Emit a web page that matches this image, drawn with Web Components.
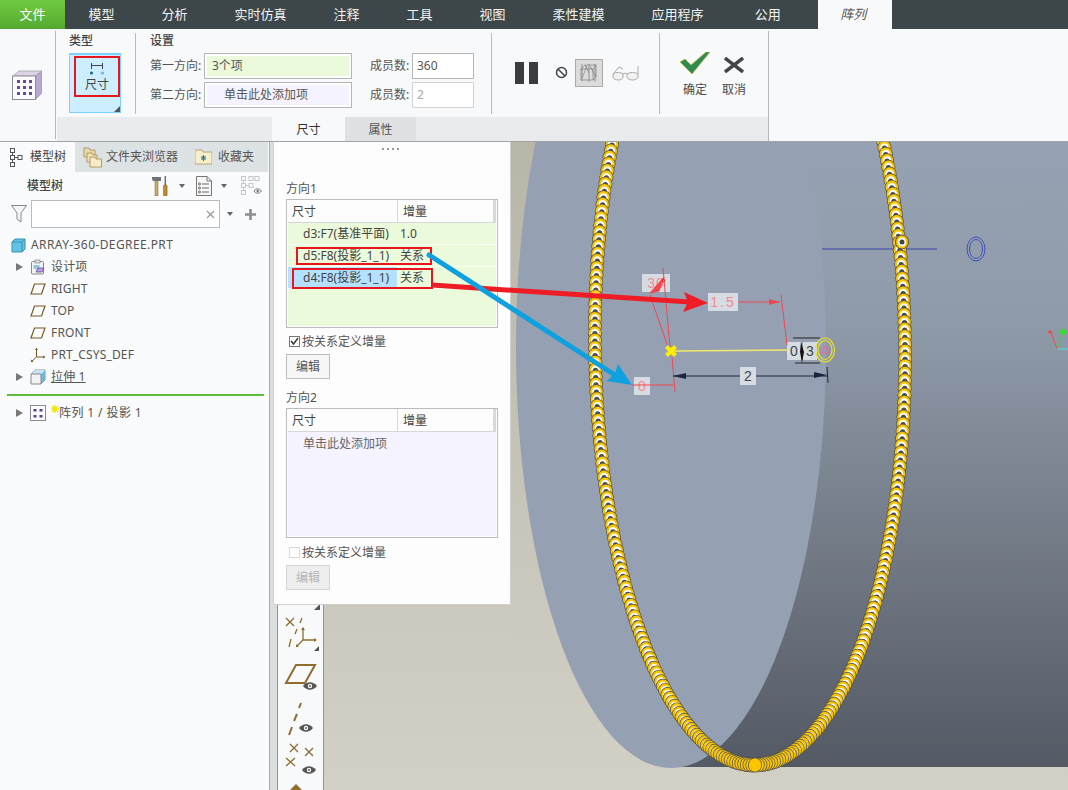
<!DOCTYPE html>
<html lang="zh">
<head>
<meta charset="utf-8">
<title>阵列</title>
<style>
  html, body { margin: 0; padding: 0; background: #f7f9fb; overflow: hidden; }
  svg { display: block; }
</style>
</head>
<body>
<pt-app>
  <pt-menubar>
    <pt-menu-tab kind="file">文件</pt-menu-tab>
    <pt-menu-tab>模型</pt-menu-tab>
    <pt-menu-tab>分析</pt-menu-tab>
    <pt-menu-tab>实时仿真</pt-menu-tab>
    <pt-menu-tab>注释</pt-menu-tab>
    <pt-menu-tab>工具</pt-menu-tab>
    <pt-menu-tab>视图</pt-menu-tab>
    <pt-menu-tab>柔性建模</pt-menu-tab>
    <pt-menu-tab>应用程序</pt-menu-tab>
    <pt-menu-tab style="margin-left:4px">公用</pt-menu-tab>
    <pt-menu-tab kind="active">阵列</pt-menu-tab>
  </pt-menubar>

  <pt-ribbon>
    <svg slot="feature" width="30" height="30" viewBox="0 0 30 30">
      <path d="M23 6 30 1V23L23 30Z" fill="#b9a8cf" stroke="#8e8e96" stroke-width=".6"/>
      <path d="M1 6 7 1H30L23 6Z" fill="#dcd4e8" stroke="#8e8e96" stroke-width=".6"/>
      <rect x=".5" y="6" width="23" height="23.5" fill="#fbfbfd" stroke="#8e8e96"/>
      <g fill="#6a4a9c">
        <rect x="5" y="10" width="3" height="3"/><rect x="11" y="10" width="3" height="3"/><rect x="17" y="10" width="3" height="3"/>
        <rect x="5" y="16" width="3" height="3"/><rect x="11" y="16" width="3" height="3"/><rect x="17" y="16" width="3" height="3"/>
        <rect x="5" y="22" width="3" height="3"/><rect x="11" y="22" width="3" height="3"/><rect x="17" y="22" width="3" height="3"/>
      </g>
    </svg>

    <pt-ribbon-group label="类型" style="width:67px;padding-left:13px">
      <pt-type-button>尺寸</pt-type-button>
    </pt-ribbon-group>

    <pt-ribbon-group label="设置" style="width:342px;padding-left:14px">
      <pt-settings>
        <span>第一方向:</span>
        <pt-collector tone="green">3个项</pt-collector>
        <span>成员数:</span>
        <pt-number>360</pt-number>
        <span>第二方向:</span>
        <pt-collector tone="violet" style="--indent:12px">单击此处添加项</pt-collector>
        <span>成员数:</span>
        <pt-number disabled>2</pt-number>
      </pt-settings>
    </pt-ribbon-group>

    <pt-ribbon-group style="width:168px">
      <pt-preview-tools></pt-preview-tools>
    </pt-ribbon-group>

    <pt-ribbon-group last style="width:108px">
      <pt-confirm-tools></pt-confirm-tools>
    </pt-ribbon-group>

    <pt-ribbon-tab slot="tabs" style="margin-left:215px" active>尺寸</pt-ribbon-tab>
    <pt-ribbon-tab slot="tabs">属性</pt-ribbon-tab>
  </pt-ribbon>

  <pt-workspace>
    <pt-model-tree slot="tree">
      <pt-tree-row root>
        <svg slot="icon" width="15" height="15" viewBox="0 0 15 15"><path d="M1 4 4 1H14V11L11 14H1Z" fill="#5fc3e6" stroke="#3d8fb3"/><path d="M1 4H11V14M11 4 14 1" fill="none" stroke="#3d8fb3"/></svg>
        ARRAY-360-DEGREE.PRT
      </pt-tree-row>
      <pt-tree-row expand>
        <svg slot="icon" width="16" height="16" viewBox="0 0 16 16"><rect x="1.5" y="2.5" width="12" height="12.5" rx="1" fill="#f4f4f4" stroke="#888"/><rect x="5" y="1" width="5" height="3" fill="#ddd" stroke="#888" stroke-width=".7"/><rect x="3.5" y="6" width="6" height="4" fill="#8fc6e3"/><path d="M6 13 8 9H14L12 13Z" fill="#b79ee0" stroke="#6a4a9c" stroke-width=".8"/></svg>
        设计项
      </pt-tree-row>
      <pt-tree-row>
        <svg slot="icon" width="16" height="16" viewBox="0 0 16 16"><path d="M1 13 4.5 3H15L11.500 13Z" fill="none" stroke="#7a5a22" stroke-width="1.200"/></svg>
        RIGHT
      </pt-tree-row>
      <pt-tree-row>
        <svg slot="icon" width="16" height="16" viewBox="0 0 16 16"><path d="M1 13 4.5 3H15L11.500 13Z" fill="none" stroke="#7a5a22" stroke-width="1.200"/></svg>
        TOP
      </pt-tree-row>
      <pt-tree-row>
        <svg slot="icon" width="16" height="16" viewBox="0 0 16 16"><path d="M1 13 4.5 3H15L11.500 13Z" fill="none" stroke="#7a5a22" stroke-width="1.200"/></svg>
        FRONT
      </pt-tree-row>
      <pt-tree-row>
        <svg slot="icon" width="16" height="16" viewBox="0 0 16 16"><path d="M6.500 1V10H15M6.500 10 1 15" fill="none" stroke="#7a5a22"/><path d="M5 3 6.500 1 8 3ZM13 8.500 15 10 13 11.500ZM1 12.500V15H3.500Z" fill="#7a5a22"/></svg>
        PRT_CSYS_DEF
      </pt-tree-row>
      <pt-tree-row expand underline>
        <svg slot="icon" width="16" height="16" viewBox="0 0 16 16"><path d="M1 5 5 1H15V11L11 15H1Z" fill="#f2f2f2" stroke="#8a8a8a"/><path d="M11 5 15 1V11L11 15Z" fill="#6db9dd"/><path d="M1 5 5 1H15L11 5Z" fill="#c6e4f1"/><path d="M1 5H11V15" fill="none" stroke="#8a8a8a"/></svg>
        拉伸 1
      </pt-tree-row>
      <pt-tree-divider></pt-tree-divider>
      <pt-tree-row expand wide>
        <svg slot="icon" width="16" height="16" viewBox="0 0 16 16"><rect x=".5" y=".5" width="15" height="15" fill="#fbfbfd" stroke="#8a8a96"/><g fill="#5c3f8d"><rect x="3.500" y="4" width="3" height="2.500"/><rect x="9.500" y="4" width="3" height="2.500"/><rect x="3.500" y="10" width="3" height="2.500"/><rect x="9.500" y="10" width="3" height="2.500"/></g></svg>
        <svg slot="mark" width="8" height="8" viewBox="0 0 8 8"><path d="M4 0V8M0 4H8M1 1 7 7M7 1 1 7" stroke="#f2e600" stroke-width="1.300"/></svg>
        阵列 1 / 投影 1
      </pt-tree-row>
    </pt-model-tree>

    <pt-graphics slot="graphics">
      <pt-pattern-panel>
        <pt-section-title>方向1</pt-section-title>
        <pt-dim-table fill="#ebfada">
          <pt-dim-row>d3:F7(基准平面)<span slot="value">1.0</span></pt-dim-row>
          <pt-dim-row marked="left:8px;right:64px;top:2px;bottom:1px">d5:F8(投影_1_1)<span slot="value">关系</span></pt-dim-row>
          <pt-dim-row selected marked="left:4px;right:63px;top:1px;bottom:-1px">d4:F8(投影_1_1)<span slot="value">关系</span></pt-dim-row>
        </pt-dim-table>
        <pt-check checked>按关系定义增量</pt-check>
        <pt-edit-button>编辑</pt-edit-button>
        <pt-section-title second>方向2</pt-section-title>
        <pt-dim-table fill="#f5f3ff" style="height:130px">
          <pt-dim-row plain>单击此处添加项</pt-dim-row>
        </pt-dim-table>
        <pt-check style="margin-top:6px">按关系定义增量</pt-check>
        <pt-edit-button disabled>编辑</pt-edit-button>
      </pt-pattern-panel>
      <pt-view-toolbar></pt-view-toolbar>
    </pt-graphics>
  </pt-workspace>
</pt-app>

<script>
class PtElement extends HTMLElement {
  constructor() {
    super();
    this.attachShadow({ mode: "open" });
  }

  getStyles() {
    return "";
  }

  getMarkup() {
    return "<slot></slot>";
  }

  connectedCallback() {
    const template = document.createElement("template");
    template.innerHTML = `<style>${this.getStyles()}</style>${this.getMarkup()}`;
    this.shadowRoot.appendChild(template.content.cloneNode(true));
  }
}

class PtApp extends PtElement {
  getStyles() {
    return `
      :host {
        display: flex; flex-direction: column;
        width: 1068px; height: 790px; overflow: hidden;
        font: 12px/16px "Noto Sans", "Noto Sans CJK SC", sans-serif;
        color: #4a4a4a; background: #f7f9fb;
      }`;
  }
}

class PtMenubar extends PtElement {
  getStyles() {
    return `:host { display: flex; height: 29px; flex: none; background: #3d4648; }`;
  }
}

class PtMenuTab extends PtElement {
  getStyles() {
    return `
      :host {
        display: flex; align-items: center; justify-content: center;
        padding: 0 23.5px 2px; color: #f2f4f4; font-size: 13px;
      }
      :host([kind=file]) {
        width: 65px; padding: 0 0 2px; box-sizing: border-box;
        background: linear-gradient(#70cb42, #55a92e); color: #fff;
      }
      :host([kind=active]) {
        width: 74px; padding: 0 4px 2px 0; box-sizing: border-box; margin-left: 14px;
        background: #f7f9fb; color: #555; font-style: italic;
      }`;
  }
}

class PtRibbon extends PtElement {
  getStyles() {
    return `
      :host {
        display: grid; grid-template-columns: 56px 713px 1fr;
        height: 113px; flex: none; box-sizing: border-box;
        background: #f7f9fb; border-bottom: 1px solid #9fa4a6;
      }
      .feature {
        display: flex; align-items: center; padding: 20px 0 0 12px;
        box-sizing: border-box; height: 88px;
      }
      .sep { border-right: 1px solid #b4b8ba; margin-top: 2px; margin-bottom: 2px; }
      .main { display: flex; flex-direction: column; border-right: 1px solid #b4b8ba; margin-top: 2px; }
      .groups { display: flex; height: 86px; flex: none; }
      .tabs { display: flex; flex: 1; background: #e9ebec; margin-left: 1px; }`;
  }

  getMarkup() {
    return `
      <div class="sep"><div class="feature"><slot name="feature"></slot></div></div>
      <div class="main">
        <div class="groups"><slot></slot></div>
        <div class="tabs"><slot name="tabs"></slot></div>
      </div>`;
  }
}

class PtRibbonGroup extends PtElement {
  getStyles() {
    return `
      :host { display: block; position: relative; flex: none; }
      .label { height: 22px; padding-top: 2px; box-sizing: border-box; color: #444; font-weight: 500; }
      :host::after {
        content: ""; position: absolute; right: 0; top: 2px; bottom: 3px;
        border-right: 1px solid #b8bcbe;
      }
      :host([last])::after { display: none; }`;
  }

  getMarkup() {
    const label = this.getAttribute("label");
    return `${label ? `<div class="label">${label}</div>` : ""}<slot></slot>`;
  }
}

class PtTypeButton extends PtElement {
  getStyles() {
    return `
      :host {
        display: block; position: relative; width: 52px; height: 60px; box-sizing: border-box;
        background: #cdeefe; border: 1px solid #7fd0ff; border-top-width: 2px;
      }
      .mark {
        position: absolute; left: 4px; top: 1px; width: 46px; height: 41px; box-sizing: border-box;
        border: 2px solid #e8141e; display: flex; flex-direction: column; align-items: center; color: #444;
      }
      svg { margin: 4px 1px 2px 0; }
      .corner { position: absolute; right: 0; bottom: 0; width: 0; height: 0; border: 3px solid transparent; border-right-color: #555; border-bottom-color: #555; }`;
  }

  getMarkup() {
    return `
      <div class="mark">
        <svg width="14" height="13" viewBox="0 0 14 13">
          <path d="M1.500 1V7M12.500 1V7M2 3.500H12" stroke="#444" fill="none"/>
          <circle cx="1.500" cy="11" r="1.600" fill="#1f6d99"/><circle cx="12.500" cy="11" r="1.600" fill="#7bb7d5"/>
        </svg>
        <slot></slot>
      </div>
      <div class="corner"></div>`;
  }
}

class PtSettings extends PtElement {
  getStyles() {
    return `
      :host {
        display: grid; grid-template-columns: 54px 148px 60px 62px;
        grid-auto-rows: 26px; row-gap: 3px; align-items: center; color: #555;
      }
      ::slotted(:nth-child(3)), ::slotted(:nth-child(7)) { margin-left: 18px; }
      ::slotted(span) { white-space: nowrap; }`;
  }
}

class PtCollector extends PtElement {
  getStyles() {
    return `
      :host {
        display: block; height: 26px; box-sizing: border-box; padding: 2px;
        border: 1px solid #b5b5b5; background: #fff;
      }
      .fill { height: 100%; line-height: 20px; padding-left: calc(5px + var(--indent, 0px)); color: #555; }
      :host([tone=green]) .fill { background: #ebfada; }
      :host([tone=violet]) .fill { background: #f5f3ff; }`;
  }

  getMarkup() {
    return `<div class="fill"><slot></slot></div>`;
  }
}

class PtNumber extends PtElement {
  getStyles() {
    return `
      :host {
        display: block; height: 26px; box-sizing: border-box; padding-left: 4px;
        line-height: 24px; border: 1px solid #b5b5b5; background: #fff; color: #555;
      }
      :host([disabled]) { border-color: #d4d4d4; color: #aaa; }`;
  }
}

class PtPreviewTools extends PtElement {
  getStyles() {
    return `
      :host { display: flex; align-items: center; height: 86px; padding: 0 0 3px 23px; box-sizing: border-box; }
      .box { width: 28px; height: 28px; margin: 0 9px 0 7px; background: #dcdcdc; border: 1px solid #aaa; box-sizing: border-box; }`;
  }

  getMarkup() {
    return `
      <svg width="24" height="22" viewBox="0 0 24 22"><rect x="0" width="9" height="22" fill="#3a3c3e"/><rect x="14" width="9" height="22" fill="#3a3c3e"/></svg>
      <svg style="margin-left:16px" width="13" height="13" viewBox="0 0 13 13"><circle cx="6.500" cy="6.500" r="5" fill="none" stroke="#444" stroke-width="1.500"/><path d="M3 3 10 10" stroke="#444" stroke-width="1.500"/></svg>
      <div class="box"><svg width="26" height="26" viewBox="0 0 26 26"><g fill="none" stroke="#7c7c7c" stroke-width=".7"><path d="M5 9 9 5H20L17 9V20H5ZM17 9H5M17 20 20 17V5M9 5 13 13M20 17 14 6M6 18 11 6"/><path d="M6 4V21M19 4V22M13 4V22"/></g></svg></div>
      <svg width="27" height="16" viewBox="0 0 27 16"><g fill="#f2f2f2" stroke="#aaa"><path d="M1 9C4 7 9 7 11 9V12C11 16 2 16 1 12Z"/><path d="M15 9C18 7 23 7 26 9V12C25 16 16 16 15 12Z"/></g><path d="M11 9C12 8 14 8 15 9M1 9 7 2 11 4M26 9V1" fill="none" stroke="#aaa"/></svg>`;
  }
}

class PtConfirmTools extends PtElement {
  getStyles() {
    return `
      :host { display: flex; padding: 20px 0 0 20px; gap: 10px; }
      .tool { display: flex; flex-direction: column; align-items: center; width: 30px; }
      .icon { height: 24px; display: flex; align-items: center; justify-content: center; margin-bottom: 7px; }`;
  }

  getMarkup() {
    return `
      <div class="tool">
        <div class="icon"><svg width="30" height="22" viewBox="0 0 30 22"><path d="M0 10 5 7 11 13 26 0H30L12 22Z" fill="#2f8a55" stroke="#b7c020" stroke-width=".7"/></svg></div>
        确定
      </div>
      <div class="tool" style="margin-left:-1px">
        <div class="icon"><svg width="20" height="16" viewBox="0 0 20 16" style="margin-top:3px"><path d="M1 1 19 15M19 1 1 15" stroke="#444" stroke-width="3.400"/></svg></div>
        取消
      </div>`;
  }
}

class PtRibbonTab extends PtElement {
  getStyles() {
    return `
      :host { display: flex; align-items: center; justify-content: center; width: 71px; padding-top: 2px; box-sizing: border-box; background: #dfe1e2; color: #555; }
      :host([active]) { width: 73px; background: #f7f9fb; color: #333; }`;
  }
}

class PtWorkspace extends PtElement {
  getStyles() {
    return `:host { display: flex; flex: 1; min-height: 0; }`;
  }

  getMarkup() {
    return `<slot name="tree"></slot><slot name="graphics"></slot>`;
  }
}

class PtModelTree extends PtElement {
  getStyles() {
    return `
      :host {
        display: flex; flex-direction: column; width: 270px; flex: none; box-sizing: border-box;
        background: #f9fbfc; border-right: 1px solid #a9adae; color: #555;
      }
      .tabs { display: flex; height: 30px; margin-right: 1px; background: #dde2e4; }
      .tab { display: flex; align-items: center; gap: 6px; }
      .tab.on { width: 75px; background: #f9fbfc; padding-left: 10px; gap: 7px; box-sizing: border-box; color: #444; }
      .tools { display: flex; align-items: center; height: 28px; padding-left: 27px; }
      .tools b { font-weight: 500; color: #444; width: 125px; }
      .caret { width: 0; height: 0; border: 3.500px solid transparent; border-top: 4px solid #666; border-bottom: 0; }
      .filter { display: flex; align-items: center; height: 28px; margin-bottom: 6px; padding-left: 11px; }
      .search {
        width: 189px; height: 28px; margin-left: 4px; box-sizing: border-box; background: #fff;
        border: 1px solid #b8bcbe; position: relative;
      }
      .search svg { position: absolute; right: 4px; top: 9px; }`;
  }

  getMarkup() {
    return `
      <div class="tabs">
        <div class="tab on">
          <svg width="13" height="19" viewBox="0 0 13 19"><g fill="none" stroke="#555"><rect x=".5" y=".5" width="4" height="4"/><rect x=".5" y="7.500" width="4" height="4"/><rect x="8" y="7.500" width="4" height="4"/><rect x=".5" y="14.500" width="4" height="4"/><path d="M2.500 4.500V7.500M2.500 11.500V14.500M4.500 9.500H8"/></g></svg>
          模型树
        </div>
        <div class="tab" style="margin-left:8px;width:112px;gap:4px">
          <svg width="19" height="21" viewBox="0 0 19 21"><g stroke="#a58a52" stroke-width=".8"><path d="M1 3V1H6L7 3H12V10H1Z" fill="#e9d9ab"/><path d="M4 8V6H9L10 8H14V15H4Z" fill="#f0e2b8"/><path d="M7 12V10H12L13 12H18.500V20H7Z" fill="#f8ecc8"/></g></svg>
          文件夹浏览器
        </div>
        <div class="tab">
          <svg width="17" height="16" viewBox="0 0 17 16"><path d="M0 15V1H7L8 3H17V15Z" fill="#f7eecb" stroke="#b2955a" stroke-width=".8"/><path d="M8.500 6V12M6 9H11M6.500 7 10.500 11M10.500 7 6.500 11" stroke="#2a6f8e"/></svg>
          收藏夹
        </div>
      </div>
      <div class="tools">
        <b>模型树</b>
        <svg width="17" height="20" viewBox="0 0 17 20"><rect x="3" y="4" width="3" height="16" fill="#d2a868" stroke="#7a6234" stroke-width=".5"/><path d="M0 1H9V5H1L0 3Z" fill="#6f7376"/><rect x="12.500" y="0" width="1.600" height="9" fill="#777"/><rect x="11.500" y="9" width="3.600" height="11" rx="1" fill="#c08a2c" stroke="#73541c" stroke-width=".5"/></svg>
        <div class="caret" style="margin-left:10px"></div>
        <svg style="margin-left:11px" width="16" height="20" viewBox="0 0 16 20"><path d="M.5.500H11L15.500 5V19.500H.5Z" fill="#f7f7f7" stroke="#777"/><path d="M11 .5V5H15.500" fill="none" stroke="#777"/><g fill="none" stroke="#666"><circle cx="3.500" cy="8" r="1"/><circle cx="3.500" cy="12" r="1"/><circle cx="3.500" cy="16" r="1"/><path d="M6 8H13M6 12H13M6 16H13"/></g></svg>
        <div class="caret" style="margin-left:9px"></div>
        <svg style="margin-left:14px" width="21" height="20" viewBox="0 0 21 20"><g fill="none" stroke="#c4c8ca"><rect x=".5" y=".5" width="4" height="4"/><rect x=".5" y="7.500" width="4" height="4"/><rect x=".5" y="14.500" width="4" height="4"/><rect x="8" y=".5" width="4" height="4"/><rect x="14" y=".5" width="4" height="4"/><rect x="8" y="7.500" width="4" height="4"/><path d="M4.500 9.500H8M2.500 4.500V7.500M2.500 11.500V14.500"/></g><path d="M13 15C15 12 18 12 20.500 15C18 18 15 18 13 15Z" fill="#eee" stroke="#777"/><circle cx="16.700" cy="15" r="1.200" fill="#777"/></svg>
      </div>
      <div class="filter">
        <svg width="16" height="18" viewBox="0 0 16 18"><path d="M.5.500H15.500L10 8V17L6 14V8Z" fill="#f4f6f7" stroke="#888"/></svg>
        <div class="search"><svg width="9" height="9" viewBox="0 0 9 9"><path d="M1 1 8 8M8 1 1 8" stroke="#999" stroke-width="1.200"/></svg></div>
        <div class="caret" style="margin-left:7px"></div>
        <svg style="margin-left:12px" width="11" height="11" viewBox="0 0 11 11"><path d="M5.500 0V11M0 5.500H11" stroke="#8a8e90" stroke-width="2.600"/></svg>
      </div>
      <slot></slot>`;
  }
}

class PtTreeRow extends PtElement {
  getStyles() {
    return `
      :host { display: flex; align-items: center; height: 22px; padding-left: 16px; white-space: nowrap; letter-spacing: .15px; }
      :host([root]) { padding-left: 11px; letter-spacing: .4px; }
      :host([wide]) { letter-spacing: .4px; }
      .arrow { width: 0; height: 0; flex: none; margin-right: 7px; border: 4.500px solid transparent; border-left: 7px solid #777; border-right: 0; visibility: hidden; }
      :host([expand]) .arrow { visibility: visible; }
      :host([root]) .arrow { display: none; }
      .icon { width: 16px; display: flex; flex: none; margin-right: 5px; }
      :host([root]) .icon { width: 15px; }
      .mark { display: flex; align-self: flex-start; margin-top: 3px; }
      .text { display: inline-block; }
      :host([underline]) .text { text-decoration: underline; }`;
  }

  getMarkup() {
    return `
      <div class="arrow"></div>
      <div class="icon"><slot name="icon"></slot></div>
      <div class="mark"><slot name="mark"></slot></div>
      <span class="text"><slot></slot></span>`;
  }
}

class PtTreeDivider extends PtElement {
  getStyles() {
    return `:host { display: block; height: 2px; margin: 6px 5px 6px 7px; background: #5ebe3b; }`;
  }

  getMarkup() {
    return "";
  }
}

class PtGraphics extends PtElement {
  getStyles() {
    return `
      :host { display: block; position: relative; flex: 1; overflow: hidden; background: #c6c4b8; }
      svg { position: absolute; left: 0; top: 0; }
      .overlay { z-index: 5; pointer-events: none; }`;
  }

  beads() {
    // 360 rings round the cylinder, drawn top to bottom so lower ones overlap upper ones
    const cx = 750, cy = 346, a = 155, b = 419, tilt = -0.012;
    const list = [];
    for (let i = 0; i < 360; i++) {
      const t = (i * Math.PI) / 180;
      const x = cx + a * Math.cos(t) - b * Math.sin(t) * tilt;
      const y = cy + b * Math.sin(t) + a * Math.cos(t) * tilt;
      if (y > 128) list.push([x, y, Math.sin(t)]);
    }
    list.sort((p, q) => p[1] - q[1]);
    return list
      .map(([x, y, s]) => {
        // the rings at the very bottom are packed so tight that only the yellow rim shows
        const inner = s > 0.994 ? "" : `<ellipse rx="4.200" ry="4.400" fill="#fff"/>
          <ellipse cy=".6" rx="2.600" ry="2.700" fill="#4a4b4d"/>`;
        return `<g transform="translate(${x.toFixed(1)} ${y.toFixed(1)})">
          <ellipse rx="7" ry="7.400" fill="#4d4f50"/>
          <ellipse rx="6.300" ry="6.700" fill="#f9c400"/>
          ${inner}
        </g>`;
      })
      .join("");
  }

  dimLabel(x, y, w, h, text, color, spacing) {
    return `<rect x="${x}" y="${y}" width="${w}" height="${h}" fill="#d7dbe2"/>
      <text x="${x + w / 2}" y="${y + h / 2 + 5}" text-anchor="middle" font-family="Liberation Sans" font-size="14" letter-spacing="${spacing || 0}" fill="${color}">${text}</text>`;
  }

  getMarkup() {
    return `
      <svg width="798" height="648" viewBox="270 142 798 648">
        <defs>
          <linearGradient id="ground" x1="0" y1="0" x2="0" y2="1"><stop offset="0" stop-color="#b8b6a8"/><stop offset="1" stop-color="#d3d1c6"/></linearGradient>
          <linearGradient id="barrel" x1="0" y1="0" x2="0" y2="1"><stop offset="0" stop-color="#96a2b3"/><stop offset=".3" stop-color="#8f9aa9"/><stop offset=".65" stop-color="#727a86"/><stop offset="1" stop-color="#545a64"/></linearGradient>
        </defs>
        <rect x="270" y="142" width="798" height="648" fill="url(#ground)"/>
        <rect x="270" y="142" width="7" height="648" fill="#dadedc"/>
        <rect x="671" y="141" width="397" height="626" fill="url(#barrel)"/>
        <ellipse cx="671" cy="347" rx="155" ry="421" fill="#95a1b2"/>
        <path d="M822 249H937" stroke="#3a45a8" stroke-width="1"/>
        ${this.beads()}
        <ellipse cx="902" cy="242" rx="6.500" ry="7" fill="#f9c400" stroke="#4d4f50"/>
        <ellipse cx="902" cy="242" rx="4" ry="4.500" fill="#fff"/><circle cx="902" cy="242" r="2.500" fill="#444"/>
        <ellipse cx="976" cy="249" rx="9" ry="12" fill="none" stroke="#3d4fc0"/>
        <ellipse cx="976" cy="249" rx="6.500" ry="9.500" fill="none" stroke="#3d4fc0"/>
        <g fill="none" stroke-width="1">
          <path d="M1057 349 1051 332" stroke="#f24a4a"/><path d="M1057 349 1063 332" stroke="#35d14a"/><path d="M1057 349H1068" stroke="#4fe0e0"/>
        </g>
        <circle cx="1050" cy="332" r="1.800" fill="#f24a4a"/><circle cx="1063" cy="332" r="3" fill="#35e02a"/>

        ${this.dimLabel(642, 274, 28, 18, "30", "#f48a92", 1)}
        ${this.dimLabel(708, 293, 30, 18, "1.5", "#f48a92", 2)}
        ${this.dimLabel(634, 377, 16, 18, "0", "#f48a92")}
        ${this.dimLabel(740, 367, 16, 18, "2", "#444")}
        ${this.dimLabel(787, 342, 14, 18, "0", "#444")}
        ${this.dimLabel(803, 342, 14, 18, "3", "#444")}
        <g fill="none" stroke="#f0474f" stroke-width="1">
          <path d="M663 268 670 347M650 295 668 347M672 357 675 392M632 385H673M738 302H780M781 295 787 345"/>
        </g>
        <path d="M769 299 780 302 769 305Z" fill="#f0474f"/>
        <path d="M650 293 664 277 659 291Z" fill="#f0474f" stroke="#f0474f"/>
        <circle cx="663.500" cy="280.500" r="1.200" fill="none" stroke="#d22"/>
        <path d="M673 351 787 350" stroke="#efe96a" stroke-width="1.500"/>
        <path d="M666.500 346.500 675.500 355.500M675.500 346.500 666.500 355.500" stroke="#ffee00" stroke-width="4"/>
        <path d="M673 376H740M756 376H827M827 367 828 383" stroke="#1c2540" fill="none"/>
        <path d="M673 376 686 373V379ZM827 375 814 372V378Z" fill="#1c2540"/>
        <path d="M793 338H820M795 363H820" stroke="#222" fill="none"/>
        <path d="M801 342 804 352 802 363 800 352Z" fill="#111"/>
        <g fill="none" stroke="#e8e322" stroke-width="1.200">
          <ellipse cx="825" cy="350" rx="9.500" ry="12"/><ellipse cx="825" cy="350" rx="7" ry="9.500"/>
        </g>
        <path d="M825 346 829 353H821Z" fill="none" stroke="#e66aa8" stroke-width="1.200"/>
      </svg>
      <slot></slot>
      <svg class="overlay" width="798" height="648" viewBox="270 142 798 648">
        <g fill="none">
          <path d="M432 285 690 302" stroke="#ee1c25" stroke-width="5"/>
          <path d="M429 255 618 377" stroke="#0fa0e0" stroke-width="5" stroke-linecap="round"/>
        </g>
        <path d="M708 303 684 292 688 302 683 312Z" fill="#ee1c25"/>
        <path d="M632 385 618 364 615 373 607 381Z" fill="#0fa0e0"/>
      </svg>`;
  }
}

class PtPatternPanel extends PtElement {
  getStyles() {
    return `
      :host {
        position: absolute; left: 3px; top: 0; z-index: 3;
        width: 238px; height: 463px; box-sizing: border-box; padding: 38px 12px 0 12px;
        background: #fdfdfd; border: 1px solid #cfd0cf; border-top: 0; display: block; color: #555;
      }
      .grip {
        position: absolute; left: 108px; top: 6px; width: 17px; height: 2px;
        background: repeating-linear-gradient(90deg, #999 0 2px, transparent 2px 5px);
      }`;
  }

  getMarkup() {
    return `<div class="grip"></div><slot></slot>`;
  }
}

class PtSectionTitle extends PtElement {
  getStyles() {
    return `
      :host { display: block; height: 16px; line-height: 18px; margin-bottom: 3px; }
      :host([second]) { margin-top: 10px; }`;
  }
}

class PtDimTable extends PtElement {
  getStyles() {
    return `
      :host {
        display: flex; flex-direction: column; height: 129px; box-sizing: border-box;
        border: 1px solid #bcbcbc; padding: 0 1px 1px;
      }
      .head { display: flex; height: 23px; flex: none; box-sizing: border-box; background: #fdfdfd; border-bottom: 1px solid #d5d7d8; color: #444; }
      .head div { display: flex; align-items: center; padding: 2px 0 0 4px; }
      .head div:first-child { width: 105px; border-right: 1px solid #d8d8d8; }
      .head div:last-child { flex: 1; border-right: 3px solid #d8dadb; padding-left: 5px; }
      .body { flex: 1; background: var(--fill); }`;
  }

  getMarkup() {
    const fill = this.getAttribute("fill");
    return `
      <div class="head"><div>尺寸</div><div>增量</div></div>
      <div class="body" style="--fill:${fill}"><slot></slot></div>`;
  }
}

class PtDimRow extends PtElement {
  getStyles() {
    return `
      :host { display: flex; position: relative; height: 21px; border-bottom: 1px solid #fafdf5; }
      .name { width: 94px; padding-left: 15px; line-height: 21px; white-space: nowrap; flex: none; color: #444; }
      :host([selected]) .name { background: #b3e1ff; }
      .value { padding-left: 3px; line-height: 21px; color: #444; }
      :host([plain]) { border: 0; }
      :host([plain]) .name { line-height: 24px; color: #666; }
      .mark { position: absolute; border: 2px solid #e8141e; box-sizing: border-box; }`;
  }

  getMarkup() {
    const marked = this.getAttribute("marked");
    const box = marked ? `<div class="mark" style="${marked}"></div>` : "";
    return `<div class="name"><slot></slot></div><div class="value"><slot name="value"></slot></div>${box}`;
  }
}

class PtCheck extends PtElement {
  getStyles() {
    return `
      :host { display: flex; align-items: center; height: 17px; margin-top: 5px; padding-left: 3px; color: #555; }
      .box { width: 11px; height: 11px; box-sizing: border-box; margin-right: 2px; border: 1px solid #777; background: #fff; }
      :host(:not([checked])) .box { border-color: #d8d8d8; }
      svg { display: block; }`;
  }

  getMarkup() {
    const tick = this.hasAttribute("checked")
      ? `<svg width="9" height="9" viewBox="0 0 9 9"><path d="M1 4 3.500 7 8 1" fill="none" stroke="#333" stroke-width="1.400"/></svg>`
      : "";
    return `<div class="box">${tick}</div><slot></slot>`;
  }
}

class PtEditButton extends PtElement {
  getStyles() {
    return `
      :host {
        display: flex; align-items: center; justify-content: center;
        width: 44px; height: 25px; margin-top: 4px; box-sizing: border-box;
        background: #f7f7f7; border: 1px solid #bdbdbd; color: #555;
      }
      :host([disabled]) { background: #eeeeee; border-color: #d5d5d5; color: #b5b5b5; }`;
  }
}

class PtViewToolbar extends PtElement {
  getStyles() {
    return `
      :host {
        position: absolute; left: 7px; top: 440px; bottom: 0; z-index: 2; width: 47px;
        box-sizing: border-box; background: #f7f9fb;
        border-left: 1px solid #8f9395; border-right: 1px solid #8f9395;
        padding-top: 23px;
        display: flex; flex-direction: column; overflow: hidden;
      }
      svg { flex: none; }`;
  }

  eye(x, y) {
    return `<path d="M${x - 7} ${y}C${x - 3} ${y - 5} ${x + 3} ${y - 5} ${x + 7} ${y}C${x + 3} ${y + 5} ${x - 3} ${y + 5} ${x - 7} ${y}Z" fill="#555"/><circle cx="${x}" cy="${y}" r="2.200" fill="#fff"/><circle cx="${x}" cy="${y}" r="1" fill="#555"/>`;
  }

  getMarkup() {
    const brown = "#8f6d2f";
    // toolbar icons use page coordinates: x from 278, y from each viewBox top
    return `
      <svg width="45" height="135" viewBox="278 605 45 135">
        <path d="M314 610 320 604V610Z" fill="#555"/>
        <g stroke="${brown}" fill="none" stroke-width="1.300">
          <path d="M286 618 294 626M294 618 286 626M302 618 300 623M297 629 295 634M291 639 289 647"/>
          <path d="M303 628V640M303 640H316M303 640 297 646"/>
        </g>
        <path d="M301 630 303 627 305 630ZM314 638 317 640 314 642ZM296 644V647H299Z" fill="${brown}"/>
        <path d="M314 651 319 646V651Z" fill="#555"/>
        <path d="M286 683 296 665H315L305 683Z" fill="none" stroke="${brown}" stroke-width="2"/>
        ${this.eye(310, 686)}
        <path d="M301 703 299 708M297 714 294 721M292 727 289 735" stroke="${brown}" stroke-width="2" fill="none"/>
        ${this.eye(306, 728)}
      </svg>
      <svg width="45" height="50" viewBox="278 740 45 50">
        <path d="M290 744 298 752M298 744 290 752M305 748 313 756M313 748 305 756M286 758 295 766M295 758 286 766" stroke="${brown}" stroke-width="1.300"/>
        ${this.eye(309, 770)}
        <path d="M296 784 302 790H290Z" fill="${brown}"/>
      </svg>`;
  }
}

customElements.define("pt-app", PtApp);
customElements.define("pt-menubar", PtMenubar);
customElements.define("pt-menu-tab", PtMenuTab);
customElements.define("pt-ribbon", PtRibbon);
customElements.define("pt-ribbon-group", PtRibbonGroup);
customElements.define("pt-type-button", PtTypeButton);
customElements.define("pt-settings", PtSettings);
customElements.define("pt-collector", PtCollector);
customElements.define("pt-number", PtNumber);
customElements.define("pt-preview-tools", PtPreviewTools);
customElements.define("pt-confirm-tools", PtConfirmTools);
customElements.define("pt-ribbon-tab", PtRibbonTab);
customElements.define("pt-workspace", PtWorkspace);
customElements.define("pt-model-tree", PtModelTree);
customElements.define("pt-tree-row", PtTreeRow);
customElements.define("pt-tree-divider", PtTreeDivider);
customElements.define("pt-graphics", PtGraphics);
customElements.define("pt-pattern-panel", PtPatternPanel);
customElements.define("pt-section-title", PtSectionTitle);
customElements.define("pt-dim-table", PtDimTable);
customElements.define("pt-dim-row", PtDimRow);
customElements.define("pt-check", PtCheck);
customElements.define("pt-edit-button", PtEditButton);
customElements.define("pt-view-toolbar", PtViewToolbar);
</script>
</body>
</html>
